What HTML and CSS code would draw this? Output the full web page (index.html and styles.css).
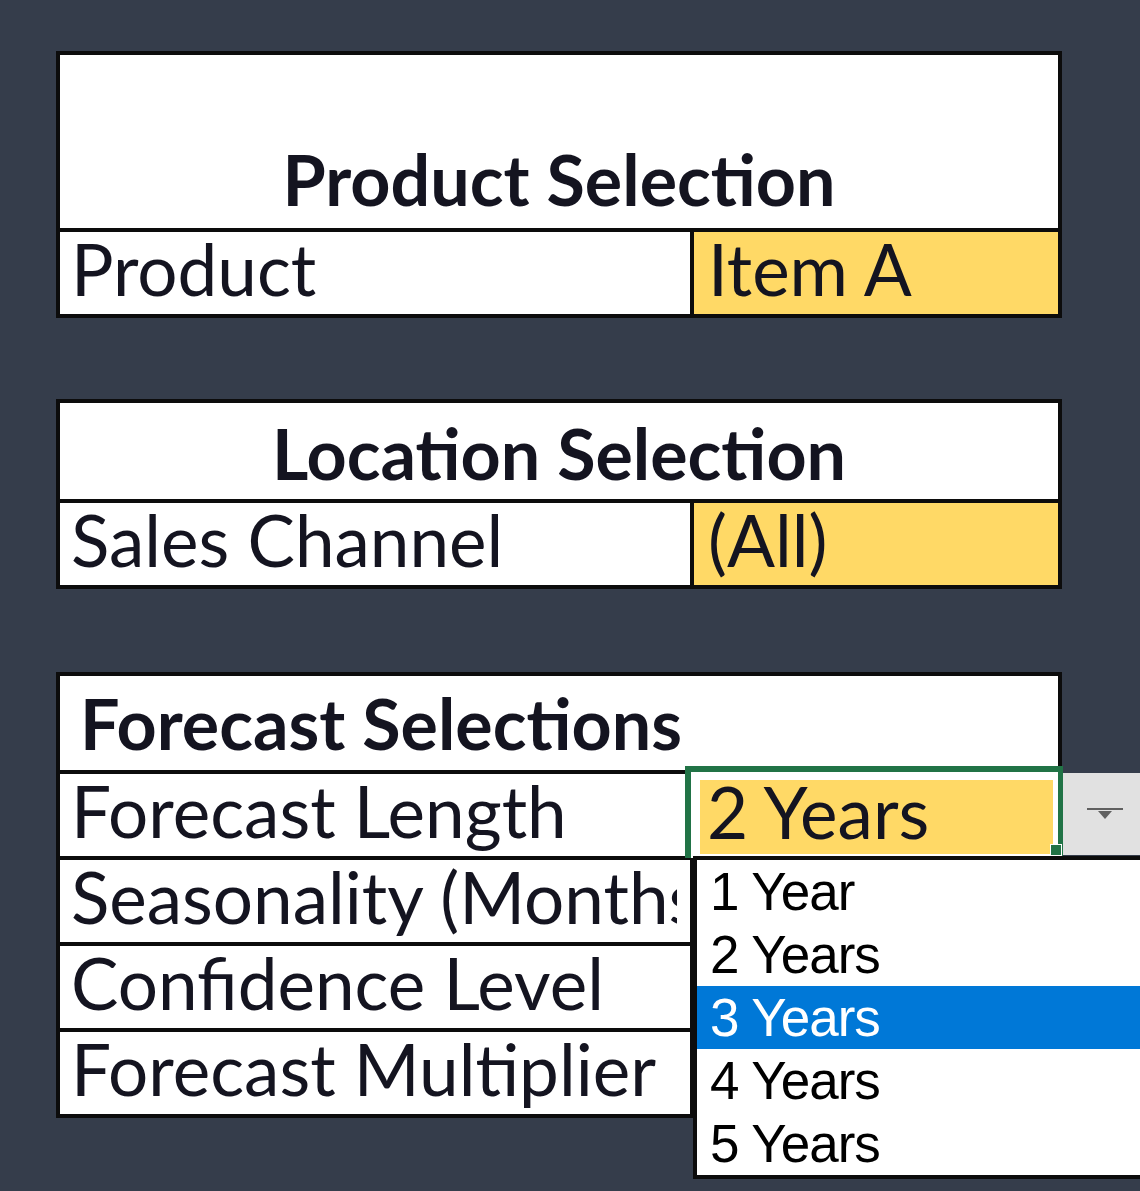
FILE: index.html
```html
<!DOCTYPE html>
<html lang="en">
<head>
    <meta charset="UTF-8">
    <meta name="viewport" content="width=device-width, initial-scale=1.0">
    <title>Forecast Inputs</title>
    <link rel="stylesheet" href="styles.css">
</head>
<body>
    <div class="sheet">
        <!-- Produto -->
        <section class="block block-product">
            <div class="head center">Product Selection</div>
            <div class="row">
                <div class="label">Product</div>
                <div class="value">Item A</div>
            </div>
        </section>

        <!-- Local -->
        <section class="block block-location">
            <div class="head center">Location Selection</div>
            <div class="row">
                <div class="label">Sales Channel</div>
                <div class="value">(All)</div>
            </div>
        </section>

        <!-- Previsao -->
        <section class="block block-forecast">
            <div class="head">Forecast Selections</div>
            <div class="row">
                <div class="label">Forecast Length</div>
                <div class="value">2 Years</div>
            </div>
            <div class="row">
                <div class="label"><span class="clip">Seasonality (Months)</span></div>
                <div class="value">12</div>
            </div>
            <div class="row">
                <div class="label">Confidence Level</div>
                <div class="value">95%</div>
            </div>
            <div class="row">
                <div class="label">Forecast Multiplier</div>
                <div class="value">100%</div>
            </div>

            <div class="selection">
                <div class="selection-fill">2 Years</div>
                <span class="fill-handle"></span>
            </div>
            <div class="dropdown-btn">
                <svg width="36" height="12" viewBox="0 0 36 12">
                    <rect x="0" y="0" width="36" height="2" fill="#606060"></rect>
                    <path d="M11 3 H25 L18 11 Z" fill="#606060"></path>
                </svg>
            </div>
            <ul class="dropdown-list">
                <li>1 Year</li>
                <li>2 Years</li>
                <li class="active">3 Years</li>
                <li>4 Years</li>
                <li>5 Years</li>
            </ul>
        </section>
    </div>
</body>
</html>
```

FILE: styles.css
```css
body {
    margin: 0;
    background-color: #353d4b;
    font-family: Lato, "Liberation Sans", sans-serif;
}
.sheet {
    padding: 51px 0 73px 56px;
    width: 1006px;
}
.block {
    position: relative;
    background-color: #fff;
    border: 4px solid #0c0c0c;
    color: #141420;
}
.block-location {
    margin-top: 81px;
}
.block-forecast {
    margin-top: 83px;
}
.head {
    display: flex;
    align-items: flex-end;
    font-size: 70px;
    font-weight: bold;
    line-height: 1;
    padding: 0 0 11px 20px;
    box-sizing: border-box;
}
.head.center {
    justify-content: center;
    padding-left: 0;
}
.block-product .head {
    height: 173px;
    padding-bottom: 14px;
}
.block-location .head {
    height: 96px;
}
.block-forecast .head {
    height: 94px;
    padding-bottom: 12px;
}
.row {
    display: grid;
    grid-template-columns: 630px 1fr;
    height: 82px;
    border-top: 4px solid #0c0c0c;
}
.label, .value {
    display: flex;
    align-items: flex-end;
    font-size: 71px;
    line-height: 1;
    padding: 0 0 10px 11px;
    white-space: nowrap;
    min-width: 0;
}
.label .clip {
    display: block;
    width: 606px;
    overflow: hidden;
    padding-bottom: 12px;
    margin-bottom: -12px;
}
.value {
    background-color: #ffd966;
    border-left: 4px solid #0c0c0c;
    padding-left: 14px;
}
.selection {
    position: absolute;
    left: 625px;
    top: 90px;
    width: 378px;
    height: 92px;
    box-sizing: border-box;
    border: 6px solid #217346;
    border-bottom: none;
    border-right-width: 5px;
    background-color: #fff;
    padding: 8px 5px 4px 9px;
}
.selection-fill {
    height: 100%;
    background-color: #ffd966;
    font-size: 71px;
    line-height: 1;
    display: flex;
    align-items: flex-end;
    padding: 0 0 7px 7px;
    box-sizing: border-box;
}
.fill-handle {
    position: absolute;
    right: -4px;
    bottom: 2px;
    width: 10px;
    height: 10px;
    background-color: #217346;
    border: 1px solid #fff;
}
.dropdown-btn {
    position: absolute;
    left: 1003px;
    top: 97px;
    width: 77px;
    height: 82px;
    background-color: #e1e1e1;
    display: flex;
    align-items: center;
    padding-left: 24px;
    box-sizing: border-box;
}
.dropdown-list {
    position: absolute;
    left: 633px;
    top: 180px;
    width: 447px;
    box-sizing: border-box;
    margin: 0;
    padding: 0;
    list-style: none;
    background-color: #fff;
    border: 4px solid #0c0c0c;
    border-right: none;
    font-family: "Liberation Sans", Arial, sans-serif;
    font-size: 53px;
    letter-spacing: -1px;
    color: #000;
}
.dropdown-list li {
    height: 63px;
    line-height: 63px;
    padding-left: 13px;
}
.dropdown-list li.active {
    background-color: #0078d7;
    color: #fff;
}
```
